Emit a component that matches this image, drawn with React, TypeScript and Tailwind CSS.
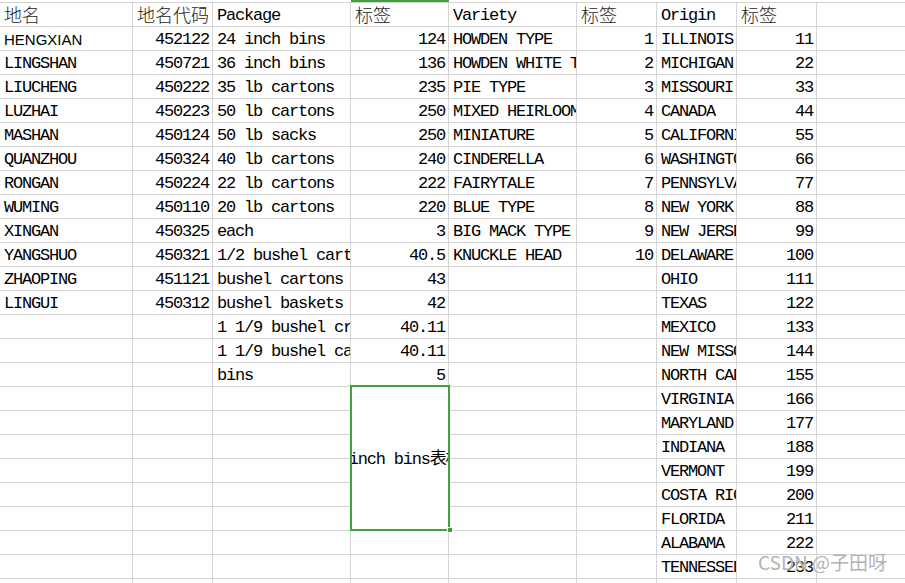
import React from 'react'

const mono = "[font-family:'Liberation_Mono','Noto_Sans_CJK_SC',monospace]"

// column alignment: left / right
const align = ['l', 'r', 'l', 'r', 'l', 'r', 'l', 'r']

const header = ['地名', '地名代码', 'Package', '标签', 'Variety', '标签', 'Origin', '标签']

const rows: string[][] = [
  ['HENGXIAN', '452122', '24 inch bins', '124', 'HOWDEN TYPE', '1', 'ILLINOIS', '11'],
  ['LINGSHAN', '450721', '36 inch bins', '136', 'HOWDEN WHITE TYPE', '2', 'MICHIGAN', '22'],
  ['LIUCHENG', '450222', '35 lb cartons', '235', 'PIE TYPE', '3', 'MISSOURI', '33'],
  ['LUZHAI', '450223', '50 lb cartons', '250', 'MIXED HEIRLOOM', '4', 'CANADA', '44'],
  ['MASHAN', '450124', '50 lb sacks', '250', 'MINIATURE', '5', 'CALIFORNIA', '55'],
  ['QUANZHOU', '450324', '40 lb cartons', '240', 'CINDERELLA', '6', 'WASHINGTON', '66'],
  ['RONGAN', '450224', '22 lb cartons', '222', 'FAIRYTALE', '7', 'PENNSYLVANIA', '77'],
  ['WUMING', '450110', '20 lb cartons', '220', 'BLUE TYPE', '8', 'NEW YORK', '88'],
  ['XINGAN', '450325', 'each', '3', 'BIG MACK TYPE', '9', 'NEW JERSEY', '99'],
  ['YANGSHUO', '450321', '1/2 bushel cartons', '40.5', 'KNUCKLE HEAD', '10', 'DELAWARE', '100'],
  ['ZHAOPING', '451121', 'bushel cartons', '43', '', '', 'OHIO', '111'],
  ['LINGUI', '450312', 'bushel baskets', '42', '', '', 'TEXAS', '122'],
  ['', '', '1 1/9 bushel crates', '40.11', '', '', 'MEXICO', '133'],
  ['', '', '1 1/9 bushel cartons', '40.11', '', '', 'NEW MISSOURI', '144'],
  ['', '', 'bins', '5', '', '', 'NORTH CAROLINA', '155'],
  ['', '', '', '', '', '', 'VIRGINIA', '166'],
  ['', '', '', '', '', '', 'MARYLAND', '177'],
  ['', '', '', '', '', '', 'INDIANA', '188'],
  ['', '', '', '', '', '', 'VERMONT', '199'],
  ['', '', '', '', '', '', 'COSTA RICA', '200'],
  ['', '', '', '', '', '', 'FLORIDA', '211'],
  ['', '', '', '', '', '', 'ALABAMA', '222'],
  ['', '', '', '', '', '', 'TENNESSEE', '233'],
  ['', '', '', '', '', '', '', ''],
]

const cols = 'grid-cols-[133px_80px_138px_98px_128px_80px_80px_80px_1fr]'

function Cell({ text, right, header, sans }: { text: string; right?: boolean; header?: boolean; sans?: boolean }) {
  return (
    <div
      className={`h-6 border-r border-b border-[#d4d4d4] overflow-hidden whitespace-nowrap flex items-end ${
        right ? 'justify-end pr-[3px]' : 'pl-[4px]'
      }`}
    >
      {header && /[^\x00-\x7f]/.test(text) ? (
        <span className="text-[18px] leading-[23px] text-[#1a1a1a] [font-family:'Noto_Sans_CJK_SC',sans-serif] font-light">{text}</span>
      ) : sans ? (
        <span className="text-[15px] leading-[20px] text-black font-medium [font-family:'Liberation_Sans',sans-serif]">{text}</span>
      ) : (
        <span className={`text-[17px] leading-[20px] tracking-[-1.2px] text-black ${mono}`}>{text}</span>
      )}
    </div>
  )
}

export default function App() {
  return (
    <div className="relative w-[905px] h-[583px] overflow-hidden bg-white">
      {/* strip above the first row */}
      <div className={`grid ${cols} h-[2px]`}>
        <div />
        <div />
        <div />
        <div className="bg-[#3fa23f]" />
      </div>
      <div className={`grid ${cols} border-t border-[#d4d4d4]`}>
        {header.map((h, i) => (
          <Cell key={'h' + i} text={h} header />
        ))}
        <div className="h-6 border-b border-[#d4d4d4]" />
        {rows.map((r, ri) => (
          <React.Fragment key={ri}>
            {r.map((c, ci) => {
              if (ci === 3 && ri >= 15 && ri <= 20) {
                if (ri !== 15) return null
                return (
                  <div
                    key={ci}
                    className="relative row-span-6 border-r border-b border-[#d4d4d4] overflow-hidden flex items-center justify-center pt-[3px]"
                  >
                    <span className={`shrink-0 whitespace-nowrap text-[17px] tracking-[-1.2px] text-black ${mono}`}>
                      24 inch bins表格标
                    </span>
                  </div>
                )
              }
              return <Cell key={ci} text={c} right={align[ci] === 'r'} sans={ri === 0 && ci === 0} />
            })}
            <div className="h-6 border-b border-[#d4d4d4]" />
          </React.Fragment>
        ))}
      </div>

      {/* selected merged cell outline */}
      <div className="absolute left-[350px] top-[385px] w-[100px] h-[146px] border-2 border-[#3fa23f] pointer-events-none" />
      <div className="absolute left-[447px] top-[527px] w-[6px] h-[6px] bg-[#3fa23f] border border-white" />

      {/* watermark */}
      <div className="absolute left-[758px] top-[550px] text-[19px] leading-[24px] text-[#a8a8a8]/90 [font-family:'Noto_Sans_CJK_SC',sans-serif] [text-shadow:0_0_2px_#fff]">
        CSDN @子田呀
      </div>
    </div>
  )
}
